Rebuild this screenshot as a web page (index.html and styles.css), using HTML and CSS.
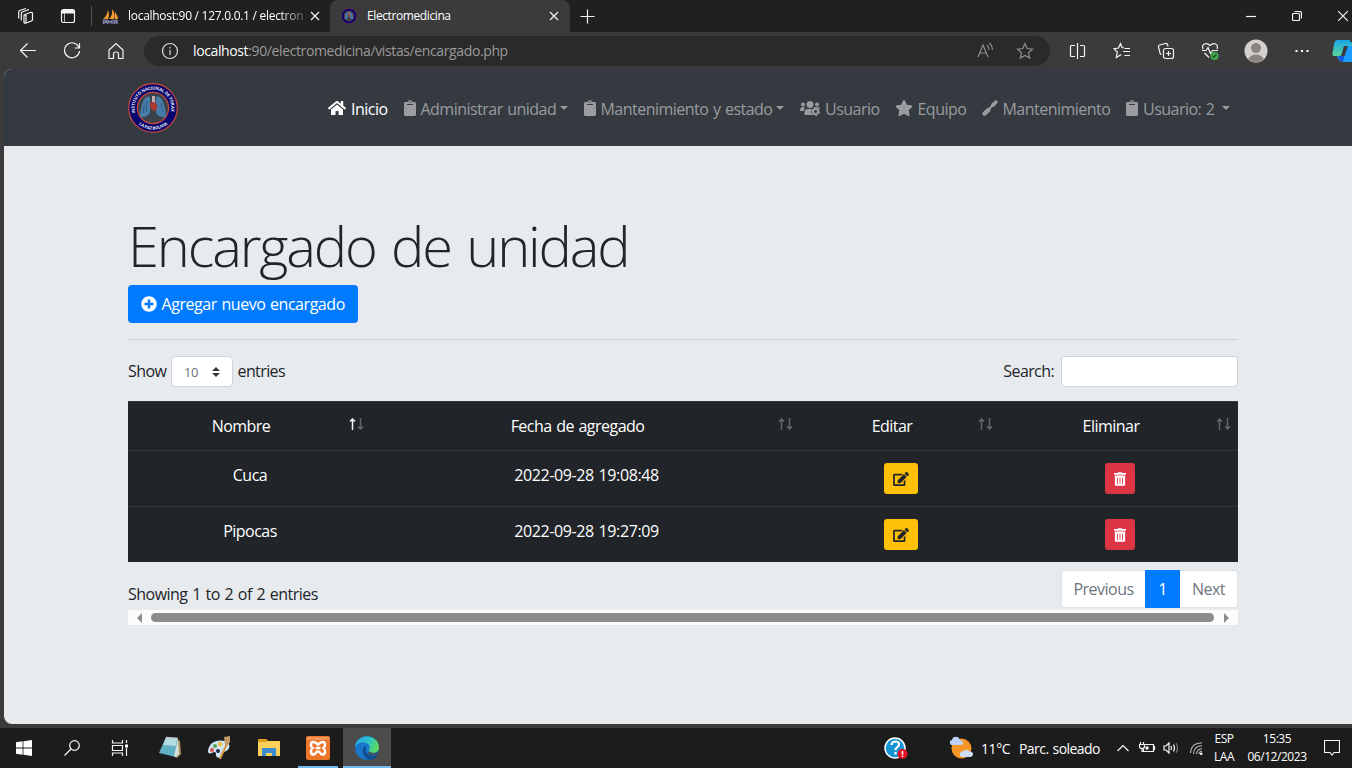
FILE: index.html
```html
<!DOCTYPE html>
<html lang="es">
<head>
<meta charset="utf-8">
<title>Electromedicina</title>
<link rel="stylesheet" href="styles.css">
</head>
<body>
<svg class="defs" width="0" height="0">
  <defs>
    <symbol id="clipboard" viewBox="0 0 384 512"><path d="M384 112v352c0 26.51-21.49 48-48 48H48c-26.51 0-48-21.49-48-48V112c0-26.51 21.49-48 48-48h80c0-35.29 28.71-64 64-64s64 28.71 64 64h80c26.51 0 48 21.49 48 48zM192 40c-13.255 0-24 10.745-24 24s10.745 24 24 24 24-10.745 24-24-10.745-24-24-24m96 114v-20a6 6 0 0 0-6-6H102a6 6 0 0 0-6 6v20a6 6 0 0 0 6 6h180a6 6 0 0 0 6-6z"/></symbol>
    <symbol id="edit" viewBox="0 0 576 512"><path d="M402.6 83.2l90.2 90.2c3.8 3.8 3.8 10 0 13.8L274.4 405.6l-92.8 10.3c-12.4 1.4-22.9-9.1-21.5-21.5l10.3-92.8L388.8 83.2c3.8-3.8 10-3.8 13.8 0zm162-22.9l-48.8-48.8c-15.2-15.2-39.9-15.2-55.2 0l-35.4 35.4c-3.8 3.8-3.8 10 0 13.8l90.2 90.2c3.8 3.8 10 3.8 13.8 0l35.4-35.4c15.2-15.3 15.2-40 0-55.2zM384 346.2V448H64V128h229.8c3.2 0 6.2-1.3 8.5-3.5l40-40c7.6-7.6 2.2-20.5-8.5-20.5H48C21.5 64 0 85.5 0 112v352c0 26.5 21.5 48 48 48h352c26.5 0 48-21.5 48-48V306.2c0-10.7-12.9-16-20.5-8.5l-40 40c-2.2 2.3-3.5 5.3-3.5 8.5z"/></symbol>
    <symbol id="trash" viewBox="0 0 448 512"><path d="M32 464a48 48 0 0 0 48 48h288a48 48 0 0 0 48-48V128H32zm272-256a16 16 0 0 1 32 0v224a16 16 0 0 1-32 0zm-96 0a16 16 0 0 1 32 0v224a16 16 0 0 1-32 0zm-96 0a16 16 0 0 1 32 0v224a16 16 0 0 1-32 0zM432 32H312l-9.4-18.7A24 24 0 0 0 281.1 0H166.8a23.72 23.72 0 0 0-21.4 13.3L136 32H16A16 16 0 0 0 0 48v32a16 16 0 0 0 16 16h416a16 16 0 0 0 16-16V48a16 16 0 0 0-16-16z"/></symbol>
    <symbol id="sort" viewBox="0 0 15 12"><path class="up" d="M3.500 12V1M1 3.500L3.500 1 6 3.500"/><path class="down" d="M11.500 0v11M9 8.500l2.500 2.500L14 8.500"/></symbol>
    <symbol id="seal" viewBox="0 0 50 50">
      <circle cx="25" cy="25" r="20" fill="none" stroke="#06066c" stroke-width="9"/>
      <circle cx="25" cy="25" r="24.3" fill="none" stroke="#c9493c" stroke-width="1.2"/>
      <circle cx="25" cy="25" r="15.6" fill="#3a4149" stroke="#c9493c" stroke-width="1.2"/>
      <path d="M22 14c-4-2-7 3-8.500 9-1 4-2 9-1 11 3 1 7-1 9-3 1-2 1-14 .5-17zM28 14c4-2 7 3 8.500 9 1 4 2 9 1 11-3 1-7-1-9-3-1-2-1-14-.5-17z" fill="#477ba8"/>
      <path d="M24 13h3v7h-3z" fill="#c5a9b5"/>
      <path d="M22 20c2-2 6-1 7 2s0 5-3 6c-3-1-5-5-4-8z" fill="#a63b35"/>
      <path d="M16 22l-1 8M19 18l-1 11M33 20l2 9" stroke="#2f5d88" fill="none"/>
    </symbol>
    <path id="arcTop" d="M7.300 30A18.400 18.400 0 1 1 42.700 30"/>
    <path id="arcBottom" d="M7.500 38A22 22 0 0 0 42.500 38"/>
  </defs>
</svg>

<div class="tabstrip">
  <div class="tab-tools">
    <svg width="18" height="18" viewBox="0 0 18 18" class="line"><path d="M7 8l6-2.500q1.500-.5 2.500.5v6.500q0 1-1 1.500L9 16q-1 .5-2-.5zM7 8q1-.5 2 .5V16M4.300 13.500V6.500q0-1 1-1.500L12 2.500M1.700 11.500V5q0-1 1-1.500L9 1.500"/></svg>
    <svg width="16" height="16" viewBox="0 0 16 16" class="line"><rect x="1.500" y="1.500" width="13" height="13" rx="2"/><path d="M2 3h12M2 4.500h12" stroke-width="2"/><path d="M4.500 5v9" stroke-width=".7"/></svg>
  </div>
  <div class="tab tab-idle">
    <svg width="17" height="17" viewBox="0 0 17 17"><path d="M1 11Q5 8 6 2q2 5 0 9zM7 11q4-4 3-10 4 5 2 10zM13 11V4q3 4 3 7z" fill="#f39a2b"/><path d="M1.500 16v-3.500h3v2h-3M6 16v-3.500l2 2 2-2V16M12 16v-3.500h3V16M12 14.500h3" stroke="#8486b4" stroke-width="1.300" fill="none"/></svg>
    <span class="tab-text fade">localhost:90 / 127.0.0.1 / electron</span>
    <svg class="tab-x line" width="10" height="10" viewBox="0 0 10 10"><path d="M1 1l8 8M9 1L1 9"/></svg>
  </div>
  <div class="tab tab-active">
    <svg width="16" height="16" viewBox="0 0 50 50"><use href="#seal"/></svg>
    <span class="tab-text second">Electromedicina</span>
    <svg class="tab-x line" width="10" height="10" viewBox="0 0 10 10"><path d="M1 1l8 8M9 1L1 9"/></svg>
  </div>
  <svg class="new-tab line" width="15" height="15" viewBox="0 0 15 15"><path d="M7.500 .5v14M.5 7.500h14"/></svg>
  <div class="window-controls line">
    <svg width="10" height="10" viewBox="0 0 10 10"><path d="M0 5.500h10"/></svg>
    <svg width="10" height="10" viewBox="0 0 10 10"><rect x=".5" y="2.500" width="7" height="7" rx="1"/><path d="M2.500.5h5q2 0 2 2v5"/></svg>
    <svg width="10" height="10" viewBox="0 0 10 10"><path d="M0 0l10 10M10 0L0 10"/></svg>
  </div>
</div>

<div class="toolbar">
  <div class="slots line">
    <svg width="18" height="18" viewBox="0 0 18 18"><path d="M17 8.500H1.500M8.500 1.500l-7 7 7 7"/></svg>
    <svg width="18" height="18" viewBox="0 0 18 18"><path d="M16 5.500A7.500 7.500 0 1 0 16.500 9M16.500 1v5h-5"/></svg>
    <svg width="18" height="18" viewBox="0 0 18 18"><path d="M2 8l7-6.500L16 8v8.500h-4.500V12q0-2-2.500-2t-2.500 2v4.500H2z"/></svg>
  </div>
  <div class="address">
    <svg class="info" width="18" height="18" viewBox="0 0 18 18"><circle cx="9" cy="9" r="7.500"/><path d="M9 8v5M9 5v1.500"/></svg>
    <span class="url"><b>localhost</b>:90/electromedicina/vistas/encargado.php</span>
    <svg class="muted" width="18" height="18" viewBox="0 0 18 18"><path d="M1 15L6 3l5 12M3 11h6M10 3q2 2 2 5M12.500 1q3 3 3 7"/></svg>
    <svg class="muted" width="18" height="18" viewBox="0 0 18 18"><path d="M9 1.500l2.200 5 5.300.6-4 3.600 1.200 5.400L9 13.500l-4.700 2.600 1.200-5.400-4-3.600 5.300-.6z"/></svg>
  </div>
  <div class="slots line">
    <svg width="18" height="18" viewBox="0 0 18 18"><path d="M8.500 1v16M6 3.500H2.500Q1.500 3.500 1.500 4.500v9q0 1 1 1h3.500M11 3.500h3.500q1 0 1 1v9q0 1-1 1H11"/></svg>
    <svg width="18" height="18" viewBox="0 0 18 18"><path d="M11 6L9 5.500 7.500 1.500l-2 4.500-4.500.7L4.300 10l-1 5.500 5-3M11.500 6.500H17M10 9.500h7M11.500 13.500H17"/></svg>
    <svg width="18" height="18" viewBox="0 0 18 18"><rect x="6.500" y="6.500" width="10" height="10" rx="2"/><path d="M11.500 9v5M9 11.500h5M4.500 12.500q-1 0-1.500-1.500L1.500 5q-.5-1.500 1-2l6-1.500q1.500-.3 2 1l.5 2"/></svg>
    <svg width="20" height="18" viewBox="0 0 20 18"><path d="M3 7C1 2 6.500 0 10 3.500 13.500 0 19 2 17 7M2 8.500h4L8 5.500l2.500 6 2-3H18M4.500 11L9 15.500"/><circle cx="14.500" cy="14" r="4" fill="#40a84a" stroke="none"/><path d="M12.700 14l1.200 1.200 2.400-2.700" stroke="#1b4922"/></svg>
    <svg class="wide" width="24" height="24" viewBox="0 0 24 24"><circle cx="12" cy="12" r="11.500" fill="#d3d0ce" stroke="none"/><circle cx="12" cy="9" r="5" fill="#8b8481" stroke="none"/><path d="M4 20Q7 15.500 12 15.500t8 4.500q-8 7-16 0z" fill="#8b8481" stroke="none"/></svg>
    <svg width="14" height="4" viewBox="0 0 14 4"><path d="M.5 1h2v2h-2zM6 1h2v2H6zM11.500 1h2v2h-2z" fill="#fff" stroke="none"/></svg>
  </div>
  <svg class="copilot" width="20" height="24" viewBox="0 0 20 24"><defs><linearGradient id="cp" x1="0" y1="0" x2="0" y2="1"><stop stop-color="#18a6e8"/><stop offset="1" stop-color="#5bd69a"/></linearGradient></defs><path d="M5 1h12l3 3v4h-4q-3 0-4 4l-1 3q-1 2-4 2H2q-2 0-1.500-3l1.500-9q1-4 3-4z" fill="url(#cp)"/><path d="M13 7h7v16h-9q-4 0-6-6h3q2 0 3-4z" fill="#1b9cff"/><path d="M6 17h6l-1 6q-3 0-5-6z" fill="#1457d8"/><path d="M12 7h4l-3.500 10H9z" fill="#3b3b3b"/></svg>
</div>

<main class="page">
  <nav class="navbar">
    <svg class="brand" width="50" height="50" viewBox="0 0 50 50"><use href="#seal"/>
      <text class="seal-text"><textPath href="#arcTop" textLength="66">INSTITUTO NACIONAL DE TORAX</textPath></text>
      <text class="seal-text wide-text"><textPath href="#arcBottom" startOffset="5" textLength="31">LA PAZ BOLIVIA</textPath></text></svg>
    <div class="nav-items">
      <a class="nav-item active"><svg width="18" height="16" viewBox="0 0 576 512"><path d="M280.370 148.260L96 300.110V464a16 16 0 0 0 16 16l112.060-.29a16 16 0 0 0 15.920-16V368a16 16 0 0 1 16-16h64a16 16 0 0 1 16 16v95.640a16 16 0 0 0 16 16.050L464 480a16 16 0 0 0 16-16V300L295.670 148.260a12.190 12.190 0 0 0-15.300 0zM571.600 251.470L488 182.560V44.050a12 12 0 0 0-12-12h-56a12 12 0 0 0-12 12v72.610L318.470 43a48 48 0 0 0-61 0L4.340 251.470a12 12 0 0 0-1.600 16.900l25.500 31A12 12 0 0 0 45.150 301l235.220-193.740a12.190 12.190 0 0 1 15.300 0L530.900 301a12 12 0 0 0 16.900-1.600l25.500-31a12 12 0 0 0-1.700-16.930z"/></svg><span>Inicio</span></a>
      <a class="nav-item"><svg width="12" height="16"><use href="#clipboard"/></svg><span>Administrar unidad</span><i class="caret"></i></a>
      <a class="nav-item"><svg width="12" height="16"><use href="#clipboard"/></svg><span>Mantenimiento y estado</span><i class="caret"></i></a>
      <a class="nav-item"><svg width="20" height="16" viewBox="0 0 20 16"><circle cx="3" cy="4.500" r="2"/><circle cx="10" cy="4.500" r="3.500"/><circle cx="17" cy="4.500" r="2"/><path d="M0 10q0-3 3-3 1.500 0 2 .5Q4 9 3.800 11H0zM4.500 15v-3Q4.500 9 8 9h3.500q-1.500 3 1 6zM14 7h4q2 0 2 2z"/><circle cx="15.500" cy="11.500" r="2.600" fill="none" stroke="#9a9c9f" stroke-width="2"/><circle cx="15.500" cy="11.500" r="3.900" fill="none" stroke="#9a9c9f" stroke-width="1.200" stroke-dasharray="2.040"/></svg><span>Usuario</span></a>
      <a class="nav-item"><svg width="18" height="16" viewBox="0 0 576 512"><path d="M259.300 17.800L194 150.200 47.900 171.500c-26.200 3.800-36.700 36.100-17.700 54.600l105.700 103-25 145.500c-4.500 26.300 23.200 46 46.400 33.700L288 439.600l130.700 68.700c23.200 12.200 50.900-7.400 46.400-33.700l-25-145.500 105.700-103c19-18.500 8.500-50.800-17.700-54.600L382 150.200 316.700 17.800c-11.700-23.600-45.600-23.900-57.400 0z"/></svg><span>Equipo</span></a>
      <a class="nav-item"><svg width="16" height="16" viewBox="0 0 16 16"><path d="M.7 12.500L5 8.200q1.700-1.200 3 .2t0 3L3.700 15.500q-1.500 1-2.700-.2t-.3-2.800zM7 7.500l2-2 .5-2L14 0l2 2-3.500 4.500-2 .5-2 2z"/></svg><span>Mantenimiento</span></a>
      <a class="nav-item user"><svg width="12" height="16"><use href="#clipboard"/></svg><span>Usuario: 2</span><i class="caret"></i></a>
    </div>
  </nav>

  <section class="content">
    <h1><span>Encargado de unidad</span></h1>
    <button class="btn-add"><svg width="16" height="16" viewBox="0 0 512 512"><path d="M256 8C119 8 8 119 8 256s111 248 248 248 248-111 248-248S393 8 256 8zm144 276c0 6.600-5.400 12-12 12h-92v92c0 6.600-5.400 12-12 12h-56c-6.600 0-12-5.400-12-12v-92h-92c-6.600 0-12-5.400-12-12v-56c0-6.600 5.400-12 12-12h92v-92c0-6.600 5.400-12 12-12h56c6.600 0 12 5.400 12 12v92h92c6.600 0 12 5.400 12 12v56z"/></svg><span>Agregar nuevo encargado</span></button>
    <hr>
    <div class="controls">
      <div class="length"><span class="show">Show</span><div class="select"><span>10</span><svg width="8" height="10" viewBox="0 0 8 10"><path d="M0 4l4-4 4 4zM0 6l4 4 4-4z"/></svg></div><span>entries</span></div>
      <label class="search"><span>Search:</span><input type="text"></label>
    </div>
    <div class="table">
      <div class="row head">
        <div><span>Nombre</span><svg class="sort asc" width="15" height="12"><use href="#sort"/></svg></div>
        <div><span>Fecha de agregado</span><svg class="sort" width="15" height="12"><use href="#sort"/></svg></div>
        <div><span>Editar</span><svg class="sort" width="15" height="12"><use href="#sort"/></svg></div>
        <div><span>Eliminar</span><svg class="sort" width="15" height="12"><use href="#sort"/></svg></div>
      </div>
      <div class="row">
        <div>Cuca</div><div class="date">2022-09-28 19:08:48</div>
        <div><button class="btn edit"><svg width="16" height="14"><use href="#edit"/></svg></button></div>
        <div><button class="btn delete"><svg width="12" height="14"><use href="#trash"/></svg></button></div>
      </div>
      <div class="row">
        <div>Pipocas</div><div class="date">2022-09-28 19:27:09</div>
        <div><button class="btn edit"><svg width="16" height="14"><use href="#edit"/></svg></button></div>
        <div><button class="btn delete"><svg width="12" height="14"><use href="#trash"/></svg></button></div>
      </div>
    </div>
    <div class="table-foot">
      <span class="showing">Showing 1 to 2 of 2 entries</span>
      <div class="pager"><span class="prev">Previous</span><span class="current">1</span><span class="next">Next</span></div>
    </div>
    <div class="scrollbar"><i class="arrow-left"></i><div class="thumb"></div><i class="arrow-right"></i></div>
  </section>
</main>

<footer class="taskbar">
  <div class="apps">
    <div><svg width="16" height="16" viewBox="0 0 16 16"><path d="M0 2.200L6.600 1.300v6.300H0zM7.400 1.200L16 0v7.600H7.400zM0 8.400h6.600v6.300L0 13.800zM7.400 8.400H16V16l-8.600-1.200z" fill="#fff"/></svg></div>
    <div><svg class="line" width="16" height="16" viewBox="0 0 16 16"><circle cx="10.500" cy="5.500" r="4.800"/><path d="M7 9L.5 15.500"/></svg></div>
    <div class="views"><svg class="line" width="18" height="16" viewBox="0 0 18 16"><path d="M1.500 0v3h10V0M1.500 16v-3h10v3M1.500 5.500h10v5h-10zM15.500 0v3M15.500 8v8"/><path d="M14 4.500h3v3h-3z" fill="#fff" stroke="none"/></svg></div>
    <div><svg width="24" height="24" viewBox="0 0 24 24"><path d="M19 3l3 2 1 13-4 4-4-2z" fill="#a89563"/><path d="M8 1l12 1-2 19L1 17z" fill="#5fb0c3"/><path d="M8 2l11 1-1 7-13-1z" fill="#b5dce2"/><path d="M20 3l1 15-3 3-2-1z" fill="#d9e0dc"/><path d="M8 1.500l12 1" stroke="#ccc" stroke-width="1.500"/></svg></div>
    <div><svg width="24" height="24" viewBox="0 0 24 24"><path d="M1 15C2 6 10 3 18 5c7 3 5 9-1 11-2 0-3 1-3 4-1 3-5 2-5-1 0-4-2-3-4-2-3 1-4 0-4-2z" fill="#cfe5f3"/><circle cx="5" cy="14" r="2" fill="#d85650"/><circle cx="8" cy="10" r="2" fill="#58a34b"/><circle cx="13" cy="8" r="2.200" fill="#f5b944"/><circle cx="11" cy="15" r="2" fill="#1c2f48"/><path d="M19 7l2 1-7 15-2 0z" fill="#df963f"/><path d="M17 1l6-1v6l-3 4-2-2z" fill="#c59867"/></svg></div>
    <div><svg width="22" height="20" viewBox="0 0 22 20"><path d="M0 1h8l2 2h12v15H0z" fill="#fcd15b"/><path d="M0 1h8l2 2-2 1H0z" fill="#df9c13"/><path d="M4 18v-8h14v8h-4v-3H8v3z" fill="#3c8ed0"/></svg></div>
    <div class="open"><svg width="24" height="24" viewBox="0 0 24 24"><rect width="24" height="24" rx="2" fill="#ee7428"/><path d="M1 1h22v3H1z" fill="#f4955a"/><path d="M12 8.500C9.500 6.500 9 6 7.500 6 4.500 6 4 10 6.500 12 4 14 4.500 18.500 7.500 18.500s1.500-3 4.500-3 1.500 3 4.500 3S20 14 17.500 12C20 10 19.500 6 16.500 6 15 6 14.500 6.500 12 8.500zM9.500 12h5" fill="none" stroke="#fff" stroke-width="2.600"/></svg></div>
    <div class="open current-app"><svg width="24" height="24" viewBox="0 0 24 24"><defs><linearGradient id="ed" x1="0" y1=".3" x2="1" y2=".6"><stop stop-color="#25a7e4"/><stop offset=".55" stop-color="#2fc6c4"/><stop offset="1" stop-color="#62dd50"/></linearGradient></defs><circle cx="12" cy="12" r="12" fill="#1976c9"/><path d="M0 11C1-3 23-3 24 11c0 5-5 7-9 5-3-2 1-3-1-7C11 5 3 5 0 11z" fill="url(#ed)"/><path d="M9 11c-3 4 0 12 6 13 4 0 7-3 8-6-6 4-14 0-12-6 0-2-1-2-2-1z" fill="#124c91"/><path d="M14 15.500c2 2 7 2 9.500.3l-.8 2c-4 2.500-9 1-9.700-1z" fill="#4c4c4c"/></svg></div>
  </div>
  <div class="tray">
    <svg class="help" width="24" height="24" viewBox="0 0 24 24"><circle cx="11" cy="12" r="10" fill="#1596d1" stroke="#fff" stroke-width="1.500"/><path d="M7.500 9q.3-3.500 4-3.500t3.500 3q0 1.500-2 2.800-1.500 1-1.500 3M11.500 16v2.500" fill="none" stroke="#fff" stroke-width="2.200"/><circle cx="18.500" cy="18" r="5" fill="#e81123"/><path d="M18.500 15v3.500M18.500 19.500v1.500" stroke="#fff" stroke-width="1.600"/></svg>
    <svg class="weather" width="24" height="24" viewBox="0 0 24 24"><circle cx="12.500" cy="12.500" r="10" fill="#f59625"/><path d="M2 9q-3-4 1-5 1-4 5-3 2 0 3 3 4 1 3 4-1 1-3 1z" fill="#bdd0f5"/><path d="M13 21q-4-2-1-5 1-1 3-1 2-3 5 0 5 1 4 4l-2 2z" fill="#cbdcfa"/></svg>
    <span class="temp">11°C</span><span class="sky">Parc. soleado</span>
    <svg class="chev line" width="12" height="8" viewBox="0 0 12 8"><path d="M.5 7L6 1.500 11.500 7"/></svg>
    <svg class="battery line" width="17" height="12" viewBox="0 0 17 12"><path d="M6 2.500h8.500v7H4.500V7M15.500 4v4M.5 2.500h5v2q0 2-2.500 2t-2.500-2zM1.500 0v2M4.500 0v2M3 6.500v3h1.500"/><path d="M6.500 4.500h3v3h-3z" fill="#fff" stroke="none"/></svg>
    <svg class="speaker line" width="17" height="14" viewBox="0 0 17 14"><path d="M1 5h2l3-3v10L3 9H1zM8 5q1 2 0 4M10.500 3.500q2 3.500 0 7"/><path d="M13 2q3 5 0 10" stroke="#777"/></svg>
    <svg class="wifi" width="13" height="13" viewBox="0 0 13 13"><path d="M.5 11Q1 1 12 .8M3.500 12Q4 4 12 3.800M6.500 12q.5-5 5.500-5.300M9 12q0-2.500 3-2.700" fill="none" stroke="#bbb" stroke-width="1.100"/><circle cx="11.200" cy="11.700" r="1.300" fill="#fff"/></svg>
    <div class="lang"><span>ESP</span><span>LAA</span></div>
    <div class="clock"><span class="hour">15:35</span><span class="day">06/12/2023</span></div>
    <svg class="note line" width="16" height="16" viewBox="0 0 16 16"><path d="M.5.5h15v12H10l-2 2.500-2-2.500H.5z"/></svg>
  </div>
</footer>
</body>
</html>
```

FILE: styles.css
```css
* { box-sizing: border-box; }
html, body { width: 1352px; height: 768px; overflow: hidden; }
body {
  margin: 0;
  background: #3b3b3b;
  font-family: "Open Sans", "Noto Sans", sans-serif;
  font-size: 16px;
  line-height: 24px;
  letter-spacing: -0.52px;
  word-spacing: 0.9px;
  color: #212529;
  display: flex;
  flex-direction: column;
}
.defs { position: absolute; }
svg { display: block; flex: none; }
span { white-space: nowrap; }
button { font: inherit; letter-spacing: inherit; word-spacing: inherit; border: 0; }
.line { fill: none; stroke: #f4f4f4; stroke-width: 1.2; }

/* Tab strip */
.tabstrip { height: 32px; flex: none; background: #202020; display: flex; align-items: center; }
.tab-tools { width: 92px; height: 20px; border-right: 1px solid #555; display: flex; align-items: center; gap: 25px; padding-left: 17px; }
.tab { height: 32px; display: flex; align-items: center; color: #fff; font-size: 12px; letter-spacing: -0.23px; word-spacing: 0; }
.tab-idle { width: 238px; padding: 0 10px; }
.tab-active { width: 240px; background: #3b3b3b; border-radius: 8px 8px 0 0; padding: 0 11px; }
.tab-text { margin-left: 9px; }
.second { margin-left: 10px; letter-spacing: -0.4px; }
.fade { width: 177px; letter-spacing: -0.28px; mask-image: linear-gradient(90deg, #000 85%, rgba(0,0,0,.2)); }
.tab-x { margin-left: auto; }
.new-tab { margin-left: 10px; }
.window-controls { display: flex; gap: 36px; margin-left: auto; padding-right: 4px; }

/* Address bar */
.toolbar { height: 37px; flex: none; display: flex; align-items: center; padding: 1px 0 0 6px; }
.slots { display: flex; align-items: center; }
.slots svg { margin: 0 13px; }
.slots svg:last-child[width="14"] { margin: 0 15px; }
.slots svg[width="20"] { margin: 0 12px; }
.slots .wide { margin: 0 12px; }
.address { width: 906px; height: 30px; margin: 0 6px 0; border-radius: 15px; background: #2a2a2a; display: flex; align-items: center; padding: 0 16px 0 17px; fill: none; stroke: #ddd; stroke-width: 1.2; }
.url { margin: 0 auto 0 14px; font-size: 14px; letter-spacing: -0.38px; color: #9a9a9a; stroke: none; }
.url b { font-weight: 400; color: #fff; }
.muted { stroke: #8e8e8e; margin-left: 21px; }
.copilot { margin-left: 8px; }

/* Page and navigation */
.page { width: 1348px; height: 655px; flex: none; margin-left: 4px; background: #e8ebee; border-radius: 8px 0 0 8px; overflow: hidden; }
.navbar { height: 77px; background: #343a40; display: flex; align-items: center; padding-left: 124px; }
.seal-text { font-size: 4.300px; font-weight: 700; fill: #e6e6f4; letter-spacing: 0; word-spacing: 0; }
.nav-items { margin-left: 150px; display: grid; grid-template-columns: 75.500px 180px 216.500px 94.500px 87px 144.500px 110px; }
.nav-item { display: flex; align-items: center; color: #9a9c9f; fill: #9a9c9f; }
.nav-item span { margin-left: 5px; padding-top: 2px; }
.nav-item.active { color: #fff; fill: #fff; }
.caret { border: 4px solid transparent; border-top-color: #9a9c9f; border-bottom: 0; margin-left: 4px; }
.user .caret { margin-left: 8px; }

/* Content */
.content { padding: 66px 0 0 124px; width: 1234px; }
h1 { margin: 0 0 6px; font-size: 56px; line-height: 67px; font-weight: 300; letter-spacing: -2.15px; word-spacing: 3px; }
.btn-add { width: 230px; height: 38px; border-radius: 4px; background: #007bff; color: #fff; fill: #fff; padding: 0 13px; display: flex; align-items: center; gap: 4.500px; letter-spacing: -0.45px; }
hr { border: 0; border-top: 1px solid #ced2d6; margin: 16px 0; }
.controls { display: flex; justify-content: space-between; height: 45px; }
.length { display: flex; height: 30px; align-items: center; }
.length > span { padding-bottom: 1px; letter-spacing: -0.6px; }
.show { width: 43px; }
.select { width: 62px; height: 31px; margin-right: 4.500px; border: 1px solid #ced4da; border-radius: 4px; background: #fff; display: flex; align-items: center; justify-content: space-between; padding: 2px 12px 0; font-size: 13px; color: #6b7279; fill: #343a40; }
.search { display: flex; height: 31px; align-items: center; gap: 7px; letter-spacing: -0.6px; }
.search span { padding-bottom: 1px; }
.search input { width: 177px; height: 31px; border: 1px solid #ced4da; border-radius: 4px; background: #fff; }
.table { background: #212529; color: #fff; }
.row { display: grid; grid-template-columns: 244px 429px 200px 237px; height: 56px; border-top: 1px solid #32383e; text-align: center; }
.row > div { padding-top: 12px; display: flex; justify-content: center; }
.head { height: 49px; }
.row.head > div { display: grid; grid-template-columns: 1fr 15px; padding: 12px 8px 0 12px; }
.row.head > div:last-child { padding-right: 7px; }
.row.head > div span { padding-right: 7px; }
.sort { fill: none; stroke-width: 1.500; margin-top: 4px; stroke: #63676b; }
.asc { --lead: #f5f5f5; }
.up { stroke: var(--lead, #63676b); }
.date { letter-spacing: -0.38px; }
.btn { height: 31px; border-radius: 3px; padding: 0 9px; }
.edit { background: #ffc107; fill: #212529; }
.delete { background: #dc3545; fill: #fff; }
.table-foot { display: flex; justify-content: space-between; padding-top: 8px; height: 48px; }
.showing { padding-top: 12px; letter-spacing: -0.52px; word-spacing: 1.05px; }
.pager { display: flex; height: 38px; color: #6c757d; }
.pager span { display: flex; align-items: center; justify-content: center; background: #fff; border: 1px solid #dee2e6; }
.pager .prev { width: 84px; border-right: 0; border-radius: 4px 0 0 4px; }
.pager .current { width: 35px; background: #007bff; color: #fff; border-color: #007bff; }
.pager .next { width: 58px; border-left: 0; border-radius: 0 4px 4px 0; }
.scrollbar { height: 15px; background: #fcfcfc; display: flex; align-items: center; padding: 0 9px; }
.thumb { width: 1063px; height: 9px; border-radius: 5px; background: #8b8b8b; margin: 0 10px 0 9px; }
.arrow-left, .arrow-right { border: 5px solid transparent; }
.arrow-left { border-right-color: #8b8b8b; border-left: 0; }
.arrow-right { border-left-color: #8b8b8b; border-right: 0; }

/* Taskbar */
.taskbar { margin-top: 4px; height: 40px; flex: none; background: #1c1c1c; color: #fff; display: flex; justify-content: space-between; }
.apps { display: grid; grid-template-columns: 48px 48px 49px 49px 49px 51px 48px 49px; }
.apps div { display: flex; align-items: center; justify-content: center; }
.apps .views { padding-right: 2px; }
.apps .open { border-bottom: 2px solid #76b9ed; margin: 0 4px 0 4px; padding-top: 2px; }
.apps .current-app { background: #4c4c4c; margin: 0 0 0 1px; }
.tray { display: flex; align-items: center; font-size: 14px; letter-spacing: -0.4px; width: 468px; }
.weather { margin-left: 41px; }
.temp { margin-left: 8px; width: 38px; padding-top: 1px; }
.sky { width: 98px; padding-top: 1px; letter-spacing: -0.55px; }
.battery { margin-left: 10px; }
.speaker { margin-left: 7px; }
.wifi { margin-left: 10px; }
.lang, .clock { display: flex; flex-direction: column; align-items: center; font-size: 12px; line-height: 17.500px; letter-spacing: -0.45px; padding-bottom: 1px; }
.lang { width: 24px; margin-left: 9px; }
.clock { width: 60px; margin-left: 11px; }
.note { margin-left: 17px; }
```
